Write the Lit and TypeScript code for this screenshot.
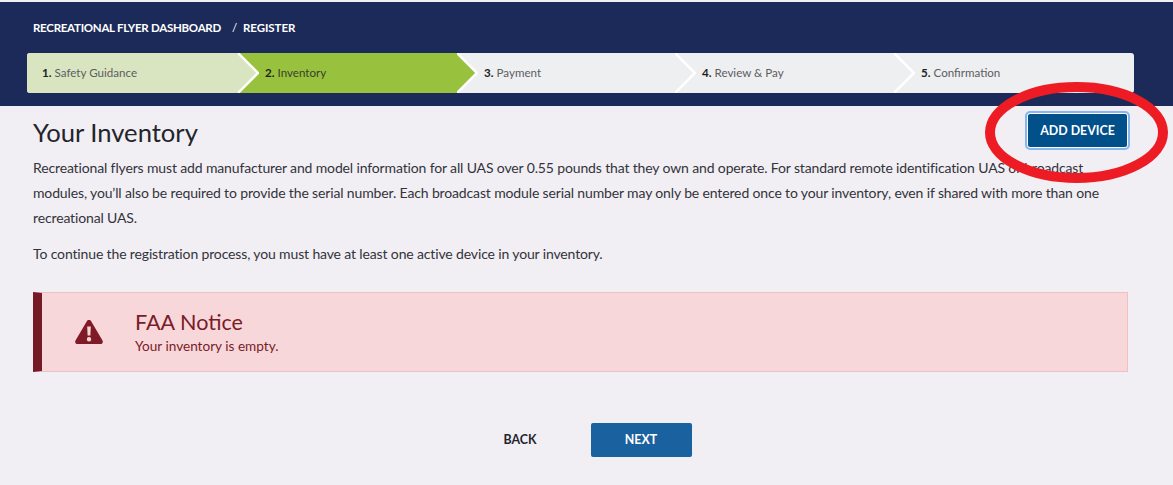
import { LitElement, html, css, svg } from "lit";
import { customElement } from "lit/decorators.js";

const steps = ["Safety Guidance", "Inventory", "Payment", "Review & Pay", "Confirmation"];

@customElement("app-root")
export class AppRoot extends LitElement {
  static styles = css`
    :host {
      display: block;
      position: relative;
      height: 485px;
      overflow: hidden;
      background: #f1eff3;
      color: #33333b;
      font-family: "Lato", "Liberation Sans", sans-serif;
      font-size: 14px;
      letter-spacing: -0.14px;
    }
    .header {
      margin-top: 2px;
      height: 104px;
      box-sizing: border-box;
      padding: 18px 39px 13px 27px;
      background: #1b2a58;
      display: flex;
      flex-direction: column;
      justify-content: space-between;
    }
    .crumbs {
      display: flex;
      padding-left: 6px;
      color: #fff;
      font-size: 11.5px;
      font-weight: 700;
      line-height: 16px;
      letter-spacing: -0.27px;
    }
    .crumbs .sep {
      margin: 0 6px 0 11px;
      font-weight: 400;
    }
    .crumbs .page {
      letter-spacing: -0.05px;
    }
    .stepper {
      display: grid;
      grid-template-columns: 211px 219px 218px 219px 1fr;
      height: 40px;
      border-radius: 3px;
      background: #eeeff1;
    }
    .step {
      position: relative;
      display: flex;
      align-items: center;
      gap: 3px;
      padding: 0 0 2px 27px;
      font-size: 11.6px;
      letter-spacing: 0;
      color: #5c5d63;
    }
    .step:first-child {
      padding-left: 15px;
      border-radius: 3px 0 0 3px;
      background: #d9e5c0;
    }
    .step.active {
      background: #98c13d;
      color: #3b3f2a;
    }
    .step b {
      color: #222;
    }
    .arrow {
      position: absolute;
      top: 0;
      left: 100%;
      z-index: 1;
      display: block;
    }
    .arrow.done {
      fill: #d9e5c0;
    }
    .arrow.active {
      fill: #98c13d;
    }
    .arrow.rest {
      fill: #eeeff1;
    }
    .arrow polyline {
      fill: none;
      stroke: #fff;
      stroke-width: 2.5;
    }
    main {
      padding: 0 45px 0 33px;
    }
    .title-row {
      display: flex;
      justify-content: space-between;
      align-items: flex-start;
      height: 49px;
    }
    h1 {
      margin: 10px 0 0;
      font-size: 25.6px;
      font-weight: 400;
      line-height: 32px;
      letter-spacing: 0;
      color: #23242c;
    }
    .add {
      margin: 7px 0 0;
      width: 101px;
      height: 35px;
      box-sizing: border-box;
      border: 1px solid #fff;
      border-radius: 3px;
      outline: 2px solid #85b6ee;
      background: #02508a;
      color: #fff;
      font: 700 12.4px "Lato", "Liberation Sans", sans-serif;
    }
    p {
      margin: 0 0 11px;
      line-height: 25px;
      max-width: 1085px;
    }
    .notice {
      margin-top: 26px;
      height: 80px;
      box-sizing: border-box;
      display: flex;
      align-items: center;
      gap: 32px;
      padding-left: 33px;
      border: 1px solid #f0c0c4;
      border-left: 9px solid #741b25;
      background: #f8d7da;
      color: #791c28;
      letter-spacing: 0;
    }
    .notice svg {
      display: block;
      fill: #7f1b26;
    }
    .notice h2 {
      margin: 0;
      font-size: 21.6px;
      font-weight: 400;
      line-height: 28px;
    }
    .notice .text {
      padding-bottom: 2px;
    }
    .notice .msg {
      margin-top: 2px;
      font-size: 13.6px;
      line-height: 16px;
    }
    .actions {
      display: flex;
      justify-content: center;
      align-items: center;
      gap: 20px;
      margin-top: 51px;
    }
    .actions button {
      width: 101px;
      height: 34px;
      padding: 0 0 2px;
      border: 0;
      border-radius: 2px;
      font: 700 12.4px "Lato", "Liberation Sans", sans-serif;
    }
    .back {
      background: none;
      color: #23242c;
    }
    .next {
      background: #1a629f;
      color: #fff;
    }
    .ring {
      position: absolute;
      left: 984px;
      top: 80px;
      pointer-events: none;
    }
    .ring ellipse {
      fill: none;
      stroke: #ed1c24;
      stroke-width: 10;
    }
  `;

  renderArrow(i: number) {
    const cls = i === 0 ? "done" : i === 1 ? "active" : "rest";
    return svg`<svg class="arrow ${cls}" width="21" height="40" viewBox="0 0 21 40">
      <polygon points="0,0 20,20 0,40"></polygon>
      <polyline points="0,0 20,20 0,40"></polyline>
    </svg>`;
  }

  render() {
    return html`
      <div class="header">
        <div class="crumbs">
          <span>RECREATIONAL FLYER DASHBOARD</span><span class="sep">/</span><span class="page">REGISTER</span>
        </div>
        <div class="stepper">
          ${steps.map(
            (s, i) => html`<div class="step ${i === 1 ? "active" : ""}">
              <b>${i + 1}.</b> ${s} ${i < 4 ? this.renderArrow(i) : ""}
            </div>`
          )}
        </div>
      </div>
      <main>
        <div class="title-row">
          <h1>Your Inventory</h1>
          <button class="add">ADD DEVICE</button>
        </div>
        <p>
          Recreational flyers must add manufacturer and model information for all UAS over 0.55 pounds that they own and
          operate. For standard remote identification UAS or broadcast modules, you’ll also be required to provide the
          serial number. Each broadcast module serial number may only be entered once to your inventory, even if shared
          with more than one recreational UAS.
        </p>
        <p>To continue the registration process, you must have at least one active device in your inventory.</p>
        <div class="notice">
          <svg width="28" height="24" viewBox="0 0 28 24">
            <path
              fill-rule="evenodd"
              d="M14 0c1 0 1.8.5 2.3 1.4l11.2 19c1 1.700-.2 3.600-2.200 3.600H2.700C.7 24-.5 22.100.5 20.400l11.200-19C12.200.5 13 0 14 0zM12.200 6.500l.4 9h2.800l.4-9zM14 17a2.200 2.200 0 1 0 0 4.400A2.200 2.200 0 0 0 14 17z"
            ></path>
          </svg>
          <div class="text">
            <h2>FAA Notice</h2>
            <div class="msg">Your inventory is empty.</div>
          </div>
        </div>
        <div class="actions">
          <button class="back">BACK</button>
          <button class="next">NEXT</button>
        </div>
      </main>
      <svg class="ring" width="186" height="106" viewBox="0 0 186 106">
        <ellipse cx="92.500" cy="52.500" rx="86.500" ry="45.500"></ellipse>
      </svg>
    `;
  }
}
